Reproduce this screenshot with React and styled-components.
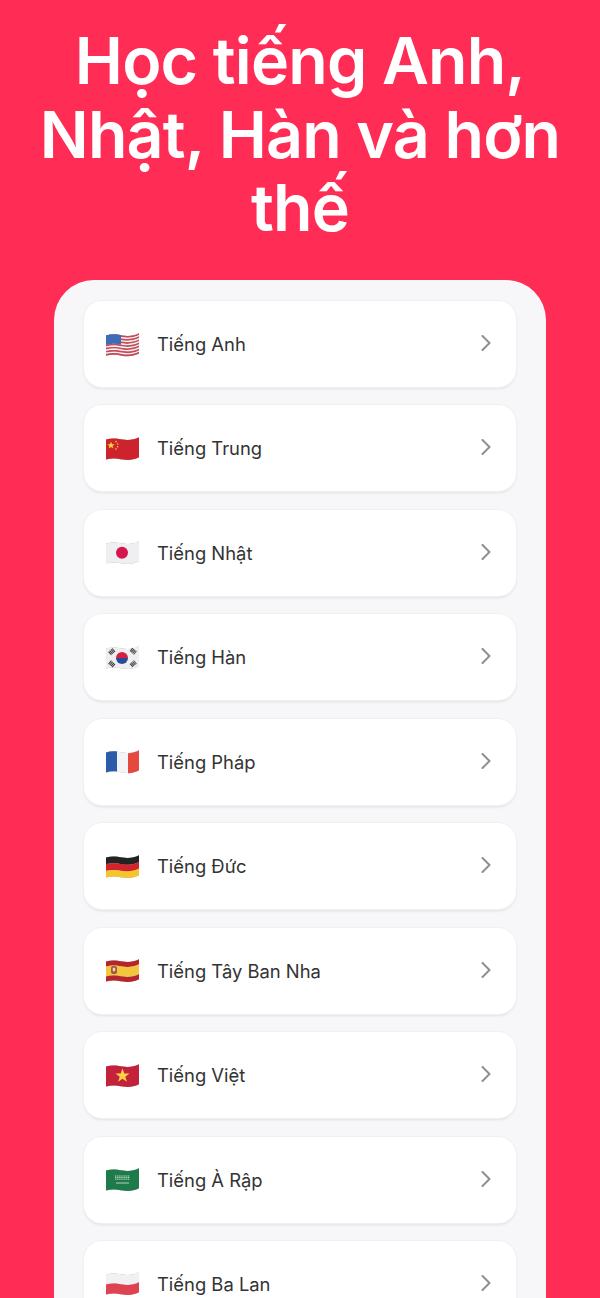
import React from "react";
import styled, { createGlobalStyle } from "styled-components";

const GlobalStyle = createGlobalStyle`
  html, body {
    margin: 0;
    height: 1298px;
    overflow: hidden;
    background: #ff2d55;
    font-family: Inter, "Liberation Sans", sans-serif;
  }
`;

// flag shape: both long edges follow the same wave, y0/y1 are the band limits
const band = (y0, y1) =>
  `M0 ${3.4 + y0} C6 ${1.8 + y0} 11 ${2.6 + y0} 17 ${3.6 + y0} S28 ${3.6 + y0} 33 ${1.2 + y0} V${1.2 + y1} C28 ${3.6 + y1} 23 ${4.6 + y1} 17 ${3.6 + y1} C11 ${2.6 + y1} 6 ${1.8 + y1} 0 ${3.4 + y1} Z`;

const Stripes = ({ rows }) =>
  rows.map(([y0, y1, fill]) => <path key={y0} d={band(y0, y1)} fill={fill} />);

const USA = () => {
  const rows = [];
  for (let i = 0; i < 7; i++) {
    rows.push([i * 3.1, i * 3.1 + 1.7, "#cb4a58"]);
    if (i < 6) rows.push([i * 3.1 + 1.7, (i + 1) * 3.1, "#f6f2f4"]);
  }
  return (
    <>
      <Stripes rows={rows} />
      <path d="M0 3.4 C5 2 10 2.2 15 3 V12.4 C10 11.6 5 11.4 0 13 Z" fill="#3f6cb8" />
    </>
  );
};

const China = () => (
  <>
    <path d={band(0, 20)} fill="#cc232c" />
    <path d="M5 5.6 L6 8.2 L8.7 8.2 L6.6 9.9 L7.4 12.6 L5 11 L2.7 12.6 L3.4 9.9 L1.3 8.2 L4 8.2 Z" fill="#f8d23f" />
    <circle cx="10" cy="5.6" r="0.8" fill="#f8d23f" />
    <circle cx="11.6" cy="8" r="0.8" fill="#f8d23f" />
    <circle cx="11.6" cy="10.8" r="0.8" fill="#f8d23f" />
    <circle cx="10" cy="13" r="0.8" fill="#f8d23f" />
  </>
);

const Japan = () => (
  <>
    <path d={band(0, 20)} fill="#efeff1" />
    <circle cx="16" cy="12.8" r="6" fill="#d5174f" />
  </>
);

const Korea = () => (
  <>
    <path d={band(0, 20)} fill="#efeff1" />
    <path d="M10 13 A6 6 0 0 1 22 13 Z" fill="#d3213f" />
    <path d="M10 13 A6 6 0 0 0 22 13 Z" fill="#2b4a9b" />
    <g stroke="#3f3f42" strokeWidth="4.4" strokeDasharray="1.1 0.5">
      <path d="M3.6 8.6 L8 4.8" />
      <path d="M25 4.4 L29.4 8" />
      <path d="M3.6 17 L8 20.8" />
      <path d="M25 20.6 L29.4 17" />
    </g>
  </>
);

const France = () => (
  <>
    <path d={band(0, 20)} fill="#f4f4f6" />
    <path d="M0 3.4 C4 2.2 8 2 11 2.6 V22.6 C8 22 4 22.2 0 23.4 Z" fill="#2a5cab" />
    <path d="M22 4.2 C26 4 30 3 33 1.2 V21.2 C30 23 26 24 22 24.2 Z" fill="#e5483f" />
  </>
);

const Germany = () => (
  <Stripes
    rows={[
      [0, 6.8, "#232323"],
      [6.7, 13.5, "#d3232c"],
      [13.4, 20, "#f6c52e"],
    ]}
  />
);

const Spain = () => (
  <>
    <Stripes
      rows={[
        [0, 5.1, "#b5262c"],
        [5, 15.1, "#f4c63f"],
        [15, 20, "#b5262c"],
      ]}
    />
    <rect x="5" y="8" width="6" height="8" rx="2" fill="#a9553a" />
    <rect x="6.8" y="9.8" width="2.4" height="3.4" fill="#e9dcc0" />
  </>
);

const Vietnam = () => (
  <>
    <path d={band(0, 20)} fill="#c4213c" />
    <path d="M16.5 5.6 L18.3 10.6 L23.5 10.6 L19.3 13.8 L20.9 18.8 L16.5 15.8 L12.1 18.8 L13.7 13.8 L9.5 10.6 L14.7 10.6 Z" fill="#f9d345" />
  </>
);

const Saudi = () => (
  <>
    <path d={band(0, 20)} fill="#1e7a4a" />
    <path d="M9 9 h15 M9 10.6 h15 M9 12.2 h15" stroke="#cfe3d5" strokeWidth="0.9" strokeDasharray="1.4 0.7" />
    <path d="M10 16 H23" stroke="#d8e8dc" strokeWidth="0.8" />
  </>
);

const Poland = () => (
  <Stripes
    rows={[
      [0, 10.1, "#f1f1f3"],
      [10, 20, "#df4351"],
    ]}
  />
);

const languages = [
  ["Tiếng Anh", USA],
  ["Tiếng Trung", China],
  ["Tiếng Nhật", Japan],
  ["Tiếng Hàn", Korea],
  ["Tiếng Pháp", France],
  ["Tiếng Đức", Germany],
  ["Tiếng Tây Ban Nha", Spain],
  ["Tiếng Việt", Vietnam],
  ["Tiếng À Rập", Saudi],
  ["Tiếng Ba Lan", Poland],
];

const App = () => (
  <Screen>
    <GlobalStyle />
    <Title>Học tiếng Anh, Nhật, Hàn và hơn thế</Title>
    <Panel>
      {languages.map(([name, Flag]) => (
        <Card key={name}>
          <FlagIcon viewBox="0 0 33 25">
            <Flag />
          </FlagIcon>
          <Name>{name}</Name>
          <Chevron viewBox="0 0 10 16">
            <path d="M1.5 1 L8.5 8 L1.5 15" />
          </Chevron>
        </Card>
      ))}
    </Panel>
  </Screen>
);

export default App;

const Screen = styled.div`
  display: flex;
  flex-direction: column;
  align-items: center;
  width: 600px;
  height: 1298px;
  overflow: hidden;
  background: #ff2d55;
`;

const Title = styled.h1`
  box-sizing: border-box;
  flex: none;
  width: 100%;
  height: 280px;
  margin: 0;
  padding: 25px 30px 0;
  color: #fff;
  font-size: 64.5px;
  font-weight: 600;
  line-height: 73.5px;
  letter-spacing: -0.8px;
  text-align: center;
`;

const Panel = styled.div`
  box-sizing: border-box;
  display: flex;
  flex: none;
  flex-direction: column;
  gap: 18.44px;
  width: 492px;
  height: 1018px;
  padding: 21px 30px 0;
  overflow: hidden;
  background: #f7f7fa;
  border-radius: 40px 40px 0 0;
`;

const Card = styled.div`
  box-sizing: border-box;
  display: flex;
  flex: none;
  align-items: center;
  height: 86px;
  padding: 0 25px 0 22px;
  background: #fff;
  border-radius: 18px;
  box-shadow: 0 0 0 1px #f0f0f3, 0 2px 3px rgba(0, 0, 0, 0.09);
`;

const FlagIcon = styled.svg`
  flex: none;
  width: 33px;
  height: 25px;
  margin-right: 18px;
  filter: drop-shadow(0 0 0.5px rgba(0, 0, 0, 0.35)) blur(0.3px);
`;

const Name = styled.span`
  flex: 1;
  color: #333;
  font-size: 18.4px;
`;

const Chevron = styled.svg`
  flex: none;
  width: 10px;
  height: 16px;
  margin-top: -2px;
  fill: none;
  stroke: #8e8e93;
  stroke-width: 2;
  stroke-linecap: round;
  stroke-linejoin: round;
`;
